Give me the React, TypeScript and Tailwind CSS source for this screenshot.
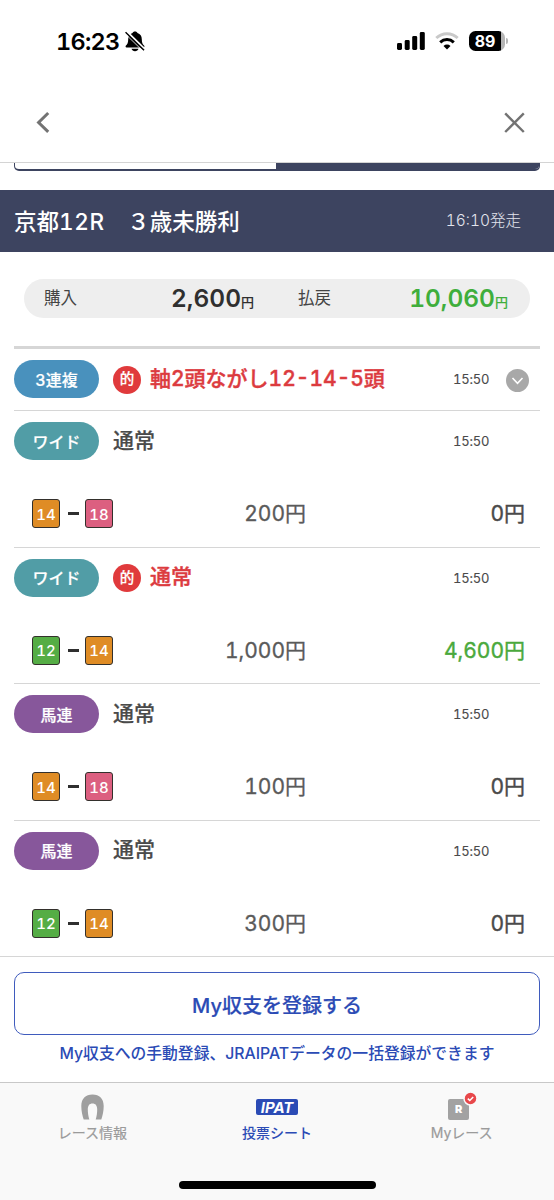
import type { ReactNode } from 'react'

type BetKind = 'trio' | 'wide' | 'quinella'

type Horse = {
  number: number
  color: string
}

type Bet = {
  id: string
  kind: BetKind
  title: string
  time: string
  hit: boolean
  horses: Horse[]
  stake: string
  payout: string
}

const GREEN = 'bg-[#55ad45]'
const ORANGE = 'bg-[#df8c25]'
const PINK = 'bg-[#dc5f80]'

const BETS: Bet[] = [
  {
    id: 'b1',
    kind: 'wide',
    title: '通常',
    time: '15:50',
    hit: false,
    horses: [
      { number: 14, color: ORANGE },
      { number: 18, color: PINK },
    ],
    stake: '200円',
    payout: '0円',
  },
  {
    id: 'b2',
    kind: 'wide',
    title: '通常',
    time: '15:50',
    hit: true,
    horses: [
      { number: 12, color: GREEN },
      { number: 14, color: ORANGE },
    ],
    stake: '1,000円',
    payout: '4,600円',
  },
  {
    id: 'b3',
    kind: 'quinella',
    title: '通常',
    time: '15:50',
    hit: false,
    horses: [
      { number: 14, color: ORANGE },
      { number: 18, color: PINK },
    ],
    stake: '100円',
    payout: '0円',
  },
  {
    id: 'b4',
    kind: 'quinella',
    title: '通常',
    time: '15:50',
    hit: false,
    horses: [
      { number: 12, color: GREEN },
      { number: 14, color: ORANGE },
    ],
    stake: '300円',
    payout: '0円',
  },
]

const StatusBar = () => (
  <div className="flex h-[82px] shrink-0 items-center pr-[47px] pl-[56px]">
    <span className="pt-[2px] text-[23.500px] leading-none font-semibold tracking-[-0.700px] text-black">16:23</span>
    <svg className="ml-[5px]" width="20" height="21" viewBox="0 0 20 21">
      <path
        d="M10 .5c-1.300 0-2.200.6-2.500 1.500C4.700 3 3.200 5.200 3.200 8.200c0 3.400-.8 5-2.200 6.300-.8.700-.5 1.900.6 1.900h16.800c1.100 0 1.400-1.200.6-1.900-1.400-1.300-2.200-2.900-2.200-6.300 0-3-1.500-5.200-4.300-6.200-.3-.9-1.200-1.500-2.500-1.500zM6.500 17.800h7c-.4 1.500-1.800 2.400-3.500 2.400s-3.100-.9-3.500-2.400z"
        fill="#000"
      />
      <path d="M1.500 .6L20 18.700" stroke="#fff" strokeWidth="2.600" />
      <path d="M.5 1.200L19 19.300" stroke="#000" strokeWidth="1.600" />
      <path d="M0 2.600L18 20.200" stroke="#fff" strokeWidth=".8" />
    </svg>
    <svg className="ml-auto" width="28" height="18" viewBox="0 0 28 18">
      <rect x="0" y="11" width="5" height="7" rx="1.400" />
      <rect x="7.700" y="8" width="5" height="10" rx="1.400" />
      <rect x="15.200" y="4" width="5" height="14" rx="1.400" />
      <rect x="22.800" y="0" width="5" height="18" rx="1.400" />
    </svg>
    <svg className="ml-[10px]" width="24" height="18" viewBox="0 0 24 18" fill="none">
      <path d="M1.300 6C7.300.3 16.700.3 22.700 6" stroke="#c9c9c9" strokeWidth="3" />
      <path d="M5.200 10.300c3.900-3.600 9.700-3.600 13.600 0" stroke="#000" strokeWidth="3" />
      <path d="M12 17.600l-3.500-3.700c2-1.800 5-1.800 7 0z" fill="#000" />
    </svg>
    <div className="-mr-px ml-[10px] flex items-center">
      <div className="flex h-5 w-9 items-center justify-center rounded-[6.500px] bg-linear-to-r from-black from-88% to-[#b5b5b5] to-88% pr-1 text-[16px] leading-none font-bold text-white">
        89
      </div>
      <div className="ml-px h-[6px] w-[2px] rounded-r-full bg-[#b5b5b5]" />
    </div>
  </div>
)

const NavBar = () => (
  <nav className="flex h-[81px] shrink-0 items-center justify-between border-b border-[#d4d4d4] pr-[29px] pl-[36px]">
    <svg width="14" height="22" viewBox="0 0 14 22" fill="none">
      <path d="M12.200 2L2.600 11.500l9.600 9.300" stroke="#737373" strokeWidth="3" />
    </svg>
    <svg width="21" height="21" viewBox="0 0 21 21" fill="none">
      <path d="M1.200 1.400l18.600 18.600M19.800 1.400L1.200 20" stroke="#737373" strokeWidth="2.400" />
    </svg>
  </nav>
)

const KindPill = ({ kind }: { kind: BetKind }) => {
  const palette: Record<BetKind, string> = {
    trio: 'bg-[#4991bd]',
    wide: 'bg-[#519da6]',
    quinella: 'bg-[#87579b]',
  }
  const labels: Record<BetKind, string> = {
    trio: '3連複',
    wide: 'ワイド',
    quinella: '馬連',
  }

  return (
    <span
      className={`flex h-[38px] w-[85px] shrink-0 items-center justify-center rounded-full pt-px text-[16px] leading-none font-medium text-white [-webkit-text-stroke:0.2px] ${palette[kind]}`}
    >
      {labels[kind]}
    </span>
  )
}

const BetHeading = ({ kind, hit, time, children }: { kind: BetKind; hit: boolean; time: string; children: ReactNode }) => (
  <div className="flex items-center pt-[11px]">
    <KindPill kind={kind} />
    {hit && (
      <span className="mt-px ml-[14px] flex size-7 items-center justify-center rounded-full bg-[#e03a3c] text-[14.500px] leading-none font-medium text-white [-webkit-text-stroke:0.2px]">
        的
      </span>
    )}
    <span
      className={`mb-[2px] text-[21px] leading-none font-medium ${hit ? 'ml-[9px] text-[#dc3b3f] [-webkit-text-stroke:0.4px]' : 'ml-[14px] text-[#4a4a4a] [-webkit-text-stroke:0.2px]'}`}
    >
      {children}
    </span>
    <span className="ml-auto w-[87px] pt-px text-[13px] leading-none tracking-[-0.200px] text-[#4a4a4a] [-webkit-text-stroke:0.1px]">
      {time}
    </span>
  </div>
)

const HorseNumber = ({ horse }: { horse: Horse }) => (
  <span
    className={`flex h-[29px] w-[28px] items-center justify-center rounded-[3px] border-[1.500px] border-[#33302c] pt-px text-[15px] leading-none font-medium text-white ${horse.color}`}
  >
    {horse.number}
  </span>
)

const BetRow = ({ bet }: { bet: Bet }) => (
  <li className="h-[136.600px] border-b border-[#d6d6d6] last:h-[135.200px] last:border-b-0">
    <BetHeading kind={bet.kind} hit={bet.hit} time={bet.time}>
      {bet.title}
    </BetHeading>
    <div className="mt-[39px] flex items-center pr-[15px] pl-[18px]">
      <HorseNumber horse={bet.horses[0]} />
      <span className="mr-[6px] ml-[8px] h-[3px] w-[11px] bg-[#2f2f2f]" />
      <HorseNumber horse={bet.horses[1]} />
      <span className="w-[193px] text-right text-[21px] leading-none text-[#5a5a5a] [-webkit-text-stroke:0.3px]">
        {bet.stake}
      </span>
      <span
        className={`ml-auto text-[21px] leading-none [-webkit-text-stroke:0.4px] ${bet.hit ? 'text-[#4aa93c]' : 'text-[#4a4a4a]'}`}
      >
        {bet.payout}
      </span>
    </div>
  </li>
)

const Summary = () => (
  <div className="mx-[24px] mt-[27px] flex h-[39px] items-center rounded-full bg-[#eee] pr-[22px] pl-[20px]">
    <span className="text-[16.500px] leading-none text-[#444]">購入</span>
    <p className="ml-auto flex items-baseline leading-none text-[#2f2f2f]">
      <span className="text-[24.500px] font-semibold">2,600</span>
      <span className="text-[13px] font-medium [-webkit-text-stroke:0.1px]">円</span>
    </p>
    <span className="ml-[44px] text-[16.500px] leading-none text-[#444]">払戻</span>
    <p className="flex w-[177px] items-baseline justify-end leading-none text-[#3fae3c]">
      <span className="text-[24.500px] font-semibold">10,060</span>
      <span className="text-[13px] font-medium [-webkit-text-stroke:0.1px]">円</span>
    </p>
  </div>
)

const TabItem = ({ label, active, children }: { label: string; active?: boolean; children: ReactNode }) => (
  <div className={`flex flex-1 flex-col items-center ${active ? 'text-[#2b4bb5]' : 'text-[#9b9b9b]'}`}>
    <div className="flex h-[41px] items-end justify-center">{children}</div>
    <span className={`text-[14px] leading-[18px] ${active ? 'font-medium' : '[-webkit-text-stroke:0.2px]'}`}>
      {label}
    </span>
  </div>
)

const TabBar = () => (
  <footer className="flex h-[118px] shrink-0 flex-col items-center border-t border-[#c8c8c8] bg-[#f9f9f9]">
    <div className="flex w-full">
      <TabItem label="レース情報">
        <svg className="mb-[4px]" width="23" height="26" viewBox="0 0 23 26">
          <path
            d="M2.700 25.500C1.400 21.500.3 17 .3 12 .3 4.700 4.500.5 11.500.5S22.700 4.700 22.700 12c0 5-1.100 9.500-2.400 13.500h-5.600c1-3.500 1.500-6.500 1.500-10 0-3.900-1.600-6-4.700-6s-4.700 2.100-4.700 6c0 3.500.5 6.500 1.500 10z"
            fill="#9f9f9f"
          />
        </svg>
      </TabItem>
      <TabItem label="投票シート" active>
        <span className="mb-[9px] flex h-4 w-[42px] items-center justify-center rounded-[2px] bg-[#2b4bb5] text-[15px] leading-none font-bold text-white italic">
          IPAT
        </span>
      </TabItem>
      <TabItem label="Myレース">
        <div className="relative mr-[6px] mb-[4px] flex h-[21px] w-[21px] items-center justify-center rounded-[2px] bg-[#a2a2a2] text-[11px] leading-none font-black text-white">
          R
          <svg className="absolute -top-[8px] -right-[9px]" width="15" height="15" viewBox="0 0 15 15" fill="none">
            <circle cx="7.500" cy="7.500" r="6.500" fill="#e8484b" stroke="#f9f9f9" strokeWidth="1.500" />
            <path d="M4.800 7.600l2 1.900 3.400-3.600" stroke="#fff" strokeWidth="1.500" />
          </svg>
        </div>
      </TabItem>
    </div>
    <div className="mt-auto mb-[11px] h-2 w-[197px] rounded-full bg-black" />
  </footer>
)

function App() {
  return (
    <div className="flex h-[1200px] w-[554px] flex-col overflow-hidden bg-white font-[Inter,'Noto_Sans_CJK_JP',sans-serif] whitespace-nowrap tabular-nums">
      <StatusBar />
      <NavBar />

      <div className="mx-[14px] flex h-2 shrink-0 overflow-hidden rounded-b-[5px] border-x border-b-2 border-[#3d4460]">
        <div className="w-[261px]" />
        <div className="flex-1 bg-[#3d4460]" />
      </div>

      <header className="mt-[19px] flex h-[62px] shrink-0 items-center justify-between bg-[#3d4460] pr-[33px] pl-[14px] text-white">
        <h1 className="pt-[2px] text-[22.500px] leading-none font-medium">
          京都<span className="tracking-[0.700px]">12R</span>　３歳未勝利
        </h1>
        <span className="text-[15.500px] leading-none font-light text-[#e3e5ee]">16:10発走</span>
      </header>

      <Summary />

      <main className="mx-[14px] mt-[28px] border-t-3 border-[#d6d6d6]">
        <div className="relative h-[62px] border-b border-[#d6d6d6]">
          <BetHeading kind="trio" hit time="15:50">
            軸2頭ながし12-14-5頭
          </BetHeading>
          <svg className="absolute top-[20px] right-[11px]" width="23" height="23" viewBox="0 0 23 23" fill="none">
            <circle cx="11.500" cy="11.500" r="11.500" fill="#a8a8a8" />
            <path d="M6.500 9l5 5.300 5-5.300" stroke="#fff" strokeWidth="1.600" />
          </svg>
        </div>
        <ul>
          {BETS.map((bet) => (
            <BetRow key={bet.id} bet={bet} />
          ))}
        </ul>
      </main>

      <section className="flex flex-1 flex-col items-center border-t border-[#d6d6d6] px-[14px] pt-[15px] text-[#2b4bb5]">
        <button
          type="button"
          className="flex h-[63px] w-full items-center justify-center rounded-[10px] border-[1.500px] border-[#3f5bbd] pt-[5px] text-[20px] leading-none font-medium [-webkit-text-stroke:0.2px]"
        >
          My収支を登録する
        </button>
        <p className="mt-[11px] text-[15.800px] leading-none font-medium">
          My収支への手動登録、JRAIPATデータの一括登録ができます
        </p>
      </section>

      <TabBar />
    </div>
  )
}

export default App
